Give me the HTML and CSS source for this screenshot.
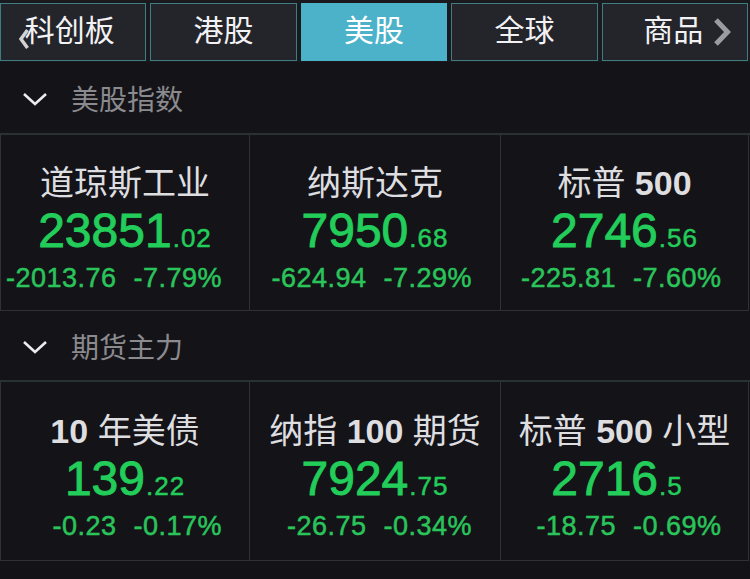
FILE: index.html
```html
<!DOCTYPE html>
<html lang="zh-CN">
<head>
<meta charset="utf-8">
<title>美股</title>
<link rel="stylesheet" href="styles.css">
</head>
<body>
<div class="tabs">
  <div class="tab first">
    <svg class="arrow-left" width="10" height="22" viewBox="0 0 10 22"><polyline points="8.5,2 2,11 8.5,20" fill="none" stroke="#d2d2d5" stroke-width="3.5" stroke-linejoin="miter"/></svg>
    <span class="tab-label">科创板</span>
  </div>
  <div class="tab"><span class="tab-label">港股</span></div>
  <div class="tab active"><span class="tab-label">美股</span></div>
  <div class="tab"><span class="tab-label">全球</span></div>
  <div class="tab more"><span class="tab-label">商品</span><svg class="arrow-right" width="20" height="30" viewBox="0 0 20 30"><polyline points="4,3 15.5,15 4,27" fill="none" stroke="#9c9ca0" stroke-width="5" stroke-linejoin="miter"/></svg></div>
</div>

<div class="sec-head first">
  <svg class="chev" width="26" height="14" viewBox="0 0 26 14"><polyline points="2,2 13,12 24,2" fill="none" stroke="#ececee" stroke-width="2.6"/></svg>
  <span>美股指数</span>
</div>
<div class="cards">
  <div class="card">
    <div class="title">道琼斯工业</div>
    <div class="num">23851<span class="dec">.02</span></div>
    <div class="chg"><span>-2013.76</span><span>-7.79%</span></div>
  </div>
  <div class="card">
    <div class="title">纳斯达克</div>
    <div class="num">7950<span class="dec">.68</span></div>
    <div class="chg"><span>-624.94</span><span>-7.29%</span></div>
  </div>
  <div class="card">
    <div class="title">标普 <b class="lat">500</b></div>
    <div class="num">2746<span class="dec">.56</span></div>
    <div class="chg"><span>-225.81</span><span>-7.60%</span></div>
  </div>
</div>

<div class="sec-head second">
  <svg class="chev" width="26" height="14" viewBox="0 0 26 14"><polyline points="2,2 13,12 24,2" fill="none" stroke="#ececee" stroke-width="2.6"/></svg>
  <span>期货主力</span>
</div>
<div class="cards">
  <div class="card tall">
    <div class="title"><b class="lat">10</b> 年美债</div>
    <div class="num">139<span class="dec">.22</span></div>
    <div class="chg"><span>-0.23</span><span>-0.17%</span></div>
  </div>
  <div class="card tall">
    <div class="title">纳指 <b class="lat">100</b> 期货</div>
    <div class="num">7924<span class="dec">.75</span></div>
    <div class="chg"><span>-26.75</span><span>-0.34%</span></div>
  </div>
  <div class="card tall">
    <div class="title">标普 <b class="lat">500</b> 小型</div>
    <div class="num">2716<span class="dec short">.5</span></div>
    <div class="chg"><span>-18.75</span><span>-0.69%</span></div>
  </div>
</div>
</body>
</html>
```

FILE: styles.css
```css
* { box-sizing: border-box; }

html, body {
  margin: 0;
  padding: 0;
}

body {
  width: 750px;
  height: 579px;
  overflow: hidden;
  background: #131317;
  font-family: "Liberation Sans", "Noto Sans CJK SC", sans-serif;
  color: #e0e0e2;
}

.tabs {
  display: grid;
  grid-template-columns: repeat(5, 1fr);
  column-gap: 4px;
  height: 62px;
  padding: 3px 2px 1px 0;
  background: #19191e;
}

.tab {
  position: relative;
  min-width: 0;
  display: flex;
  align-items: center;
  justify-content: center;
  height: 58px;
  padding-bottom: 9px;
  background: #24242b;
  border: 1px solid #3f7d84;
  color: #f2f2f4;
}

.tab.first {
  padding-right: 7px;
}

.tab-label {
  font-family: "Noto Sans CJK SC", sans-serif;
  font-size: 30px;
  line-height: 40px;
}

.tab.active {
  background: #4cb2ca;
  border-color: #4cb2ca;
  color: #ffffff;
}

.tab.more {
  padding-left: 26px;
}

.arrow-left {
  position: absolute;
  left: 18px;
  top: 24px;
}

.arrow-right {
  margin-left: 9px;
  margin-top: 9px;
}

.sec-head {
  display: flex;
  align-items: center;
  border-bottom: 2px solid #2a3131;
  background: #141418;
}

.sec-head.first { height: 73px; }
.sec-head.second { height: 71px; }

.chev {
  margin-left: 22px;
  margin-right: 23px;
  margin-top: 2px;
}

.sec-head span {
  font-family: "Noto Sans CJK SC", sans-serif;
  font-size: 28px;
  color: #8a8a8f;
}

.cards {
  display: grid;
  grid-template-columns: 249px 251px 248px;
  width: 748px;
  border-left: 1px solid #303036;
}

.card {
  display: flex;
  flex-direction: column;
  align-items: center;
  padding: 28px 0 13px;
  border-right: 1px solid #303036;
  border-bottom: 1px solid #303036;
  background: #141418;
  white-space: nowrap;
}

.card.tall {
  padding: 29px 0 15px;
}

.title {
  font-size: 34px;
  line-height: 40px;
  color: #dedee0;
}

.lat {
  font-weight: 700;
}

.num {
  font-size: 48px;
  line-height: 56px;
  color: #22cd5a;
  -webkit-text-stroke: 0.9px #22cd5a;
}

.dec {
  font-size: 26px;
  line-height: 1;
  letter-spacing: 1px;
  margin-left: 1px;
  -webkit-text-stroke: 0.5px #22cd5a;
}

.dec.short {
  padding-right: 15px;
}

.chg {
  display: grid;
  grid-template-columns: 1fr 1fr;
  column-gap: 17px;
  width: 100%;
  font-size: 27px;
  line-height: 38px;
  letter-spacing: 0.5px;
  color: #2ac45b;
  -webkit-text-stroke: 0.5px #2ac45b;
}

.chg span:first-child {
  justify-self: end;
}
```
